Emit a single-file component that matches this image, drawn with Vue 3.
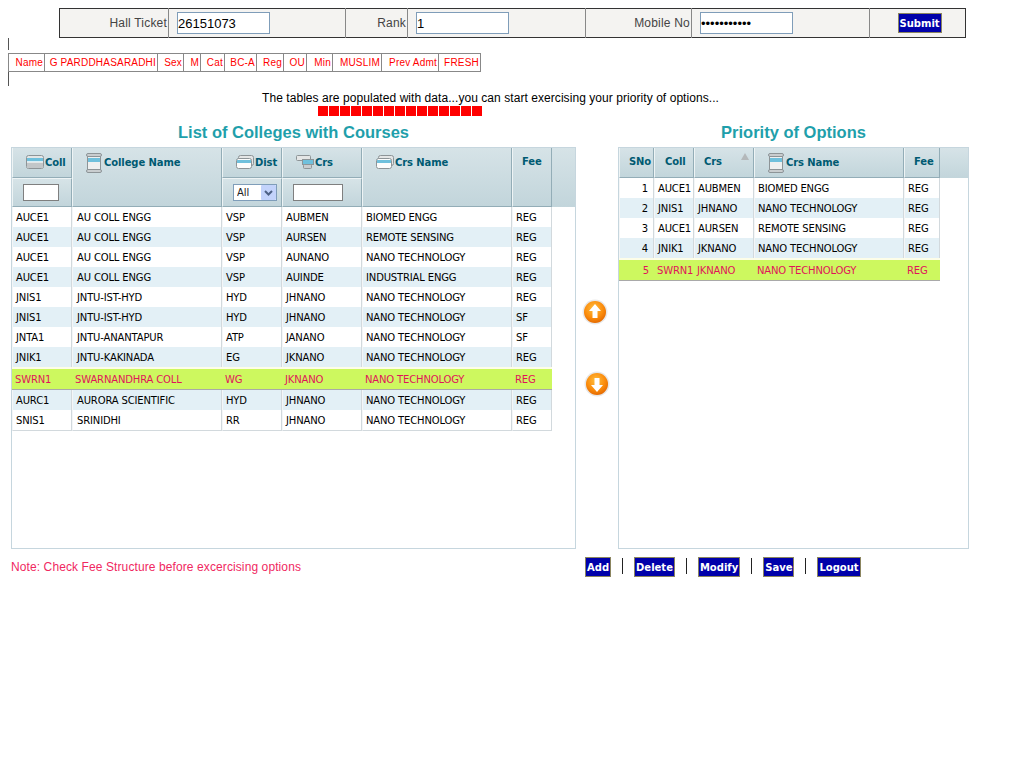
<template>
  <div class="page">
    <svg class="defs" xmlns="http://www.w3.org/2000/svg">
      <defs>
        <radialGradient id="orb" cx="45%" cy="35%" r="70%">
          <stop offset="0" stop-color="#ffc040" />
          <stop offset="0.6" stop-color="#fb8c0c" />
          <stop offset="1" stop-color="#e06400" />
        </radialGradient>
      </defs>
      <symbol id="ic-stack" viewBox="0 0 18 14">
        <rect x="0.5" y="0.5" width="17" height="13" rx="2" fill="#e4e6e6" stroke="#8d9497" />
        <rect x="1" y="3" width="16" height="3" fill="#6fc0dc" />
        <rect x="1" y="6" width="16" height="1" fill="#d8eef5" />
        <rect x="1" y="8" width="16" height="5" fill="#c2c6c8" />
      </symbol>
      <symbol id="ic-scroll" viewBox="0 0 16 20">
        <rect x="1.500" y="1.500" width="13" height="17" fill="#eef0f0" stroke="#8d9497" />
        <rect x="0.5" y="0.5" width="15" height="3" rx="1.500" fill="#c9cdcf" stroke="#8d9497" />
        <rect x="0.5" y="16.500" width="15" height="3" rx="1.500" fill="#c9cdcf" stroke="#8d9497" />
        <rect x="2" y="5" width="12" height="4" fill="#6fc0dc" />
      </symbol>
      <symbol id="ic-window" viewBox="0 0 18 14">
        <rect x="2.500" y="0.5" width="15" height="10" rx="2" fill="#e4e6e6" stroke="#8d9497" />
        <rect x="0.5" y="3.500" width="15" height="10" rx="2" fill="#fbfcfc" stroke="#8d9497" />
        <rect x="1" y="5" width="14" height="3" fill="#6fc0dc" />
      </symbol>
      <symbol id="ic-tree" viewBox="0 0 18 14">
        <rect x="0.5" y="0.5" width="14" height="5" rx="1" fill="#e4e6e6" stroke="#8d9497" />
        <rect x="6.500" y="4.500" width="11" height="5" fill="#6fc0dc" stroke="#8d9497" />
        <rect x="7.500" y="9.500" width="8" height="4" rx="1" fill="#c9cdcf" stroke="#8d9497" />
      </symbol>
    </svg>

    <table class="login">
      <colgroup>
        <col style="width:109px" /><col style="width:177px" />
        <col style="width:62px" /><col style="width:178px" />
        <col style="width:106px" /><col style="width:178px" />
        <col />
      </colgroup>
      <tbody>
        <tr>
          <td class="lbl">Hall Ticket</td>
          <td><input class="txt" type="text" value="26151073" /></td>
          <td class="lbl">Rank</td>
          <td><input class="txt" type="text" value="1" /></td>
          <td class="lbl">Mobile No</td>
          <td><input class="txt" type="password" value="98660123456" /></td>
          <td class="center"><button class="btn submit">Submit</button></td>
        </tr>
      </tbody>
    </table>

    <div class="tick"></div>
    <table class="info">
      <colgroup>
        <col v-for="(c, i) in infoCells" :key="i" :style="{ width: c.w + 'px' }" />
      </colgroup>
      <tbody>
        <tr>
          <td v-for="(c, i) in infoCells" :key="i">{{ c.t }}</td>
        </tr>
      </tbody>
    </table>
    <div class="tick tick2"></div>

    <p class="msg">The tables are populated with data...you can start exercising your priority of options...</p>
    <div class="progress">
      <span v-for="n in 15" :key="n"></span>
    </div>

    <div class="main">
      <h2 class="title">List of Colleges with Courses</h2>
      <div></div>
      <h2 class="title">Priority of Options</h2>

      <div class="panel left-panel">
        <table class="grid">
          <colgroup>
            <col style="width:60px" /><col style="width:150px" /><col style="width:60px" />
            <col style="width:80px" /><col style="width:150px" /><col style="width:40px" />
          </colgroup>
          <thead>
            <tr class="h1">
              <th><svg class="ic" width="18" height="14"><use href="#ic-stack" /></svg>Coll</th>
              <th rowspan="2"><svg class="ic tall" width="16" height="20"><use href="#ic-scroll" /></svg>College Name</th>
              <th><svg class="ic" width="18" height="14"><use href="#ic-window" /></svg>Dist</th>
              <th><svg class="ic" width="18" height="14"><use href="#ic-tree" /></svg>Crs</th>
              <th rowspan="2"><svg class="ic" width="18" height="14"><use href="#ic-window" /></svg>Crs Name</th>
              <th rowspan="2" class="plain">Fee</th>
            </tr>
            <tr class="h2">
              <th class="f"><input class="filter w36" type="text" /></th>
              <th class="f">
                <div class="dd">
                  <select><option>All</option></select>
                  <span class="dd-btn">
                    <svg width="9" height="6" viewBox="0 0 9 6"><path d="M1 1l3.500 3.500L8 1" fill="none" stroke="#4d6185" stroke-width="2" /></svg>
                  </span>
                </div>
              </th>
              <th class="f"><input class="filter w50" type="text" /></th>
            </tr>
          </thead>
          <tbody>
            <tr v-for="(r, i) in colleges" :key="i" :class="rowClass(r)">
              <td>{{ r.coll }}</td>
              <td class="p5">{{ r.name }}</td>
              <td>{{ r.dist }}</td>
              <td>{{ r.crs }}</td>
              <td>{{ r.course }}</td>
              <td>{{ r.fee }}</td>
            </tr>
          </tbody>
        </table>
      </div>

      <div class="arrows">
        <svg class="arrow up" width="26" height="26" viewBox="0 0 26 26">
          <circle cx="13" cy="13" r="12.500" fill="#e8e8e8" />
          <circle cx="13" cy="13" r="11" fill="url(#orb)" />
          <path d="M13 5l6 7h-3.500v7h-5v-7H7z" fill="#fff" />
        </svg>
        <svg class="arrow down" width="26" height="26" viewBox="0 0 26 26">
          <circle cx="13" cy="13" r="12.500" fill="#e8e8e8" />
          <circle cx="13" cy="13" r="11" fill="url(#orb)" />
          <path d="M13 21l-6-7h3.500V7h5v7H19z" fill="#fff" />
        </svg>
      </div>

      <div class="panel right-panel">
        <table class="grid">
          <colgroup>
            <col style="width:35px" /><col style="width:40px" /><col style="width:60px" />
            <col style="width:150px" /><col style="width:36px" />
          </colgroup>
          <thead>
            <tr class="h1">
              <th class="plain">SNo</th>
              <th class="plain p10">Coll</th>
              <th class="plain sorted">Crs<span class="sort"></span></th>
              <th><svg class="ic tall" width="16" height="20"><use href="#ic-scroll" /></svg>Crs Name</th>
              <th class="plain">Fee</th>
            </tr>
          </thead>
          <tbody>
            <tr v-for="r in priority" :key="r.sno" :class="rowClass(r)">
              <td class="num">{{ r.sno }}</td>
              <td>{{ r.coll }}</td>
              <td>{{ r.crs }}</td>
              <td>{{ r.course }}</td>
              <td>{{ r.fee }}</td>
            </tr>
          </tbody>
        </table>
      </div>

      <p class="note">Note: Check Fee Structure before excercising options</p>
      <div class="actions">
        <template v-for="(a, i) in actions" :key="a">
          <i v-if="i" class="sep"></i>
          <button class="btn">{{ a }}</button>
        </template>
      </div>
    </div>
  </div>
</template>

<script setup>
const infoCells = [
  { t: 'Name', w: 36 },
  { t: 'G PARDDHASARADHI', w: 113 },
  { t: 'Sex', w: 26 },
  { t: 'M', w: 17 },
  { t: 'Cat', w: 24 },
  { t: 'BC-A', w: 32 },
  { t: 'Reg', w: 27 },
  { t: 'OU', w: 23 },
  { t: 'Min', w: 26 },
  { t: 'MUSLIM', w: 49 },
  { t: 'Prev Admt', w: 57 },
  { t: 'FRESH', w: 42 }
]

const nano = 'NANO TECHNOLOGY'
const colleges = [
  { coll: 'AUCE1', name: 'AU COLL ENGG', dist: 'VSP', crs: 'AUBMEN', course: 'BIOMED ENGG', fee: 'REG' },
  { coll: 'AUCE1', name: 'AU COLL ENGG', dist: 'VSP', crs: 'AURSEN', course: 'REMOTE SENSING', fee: 'REG', alt: true },
  { coll: 'AUCE1', name: 'AU COLL ENGG', dist: 'VSP', crs: 'AUNANO', course: nano, fee: 'REG' },
  { coll: 'AUCE1', name: 'AU COLL ENGG', dist: 'VSP', crs: 'AUINDE', course: 'INDUSTRIAL ENGG', fee: 'REG', alt: true },
  { coll: 'JNIS1', name: 'JNTU-IST-HYD', dist: 'HYD', crs: 'JHNANO', course: nano, fee: 'REG' },
  { coll: 'JNIS1', name: 'JNTU-IST-HYD', dist: 'HYD', crs: 'JHNANO', course: nano, fee: 'SF', alt: true },
  { coll: 'JNTA1', name: 'JNTU-ANANTAPUR', dist: 'ATP', crs: 'JANANO', course: nano, fee: 'SF' },
  { coll: 'JNIK1', name: 'JNTU-KAKINADA', dist: 'EG', crs: 'JKNANO', course: nano, fee: 'REG', alt: true },
  { coll: 'SWRN1', name: 'SWARNANDHRA COLL', dist: 'WG', crs: 'JKNANO', course: nano, fee: 'REG', picked: true },
  { coll: 'AURC1', name: 'AURORA SCIENTIFIC', dist: 'HYD', crs: 'JHNANO', course: nano, fee: 'REG', alt: true },
  { coll: 'SNIS1', name: 'SRINIDHI', dist: 'RR', crs: 'JHNANO', course: nano, fee: 'REG' }
]

const priority = [
  { sno: 1, coll: 'AUCE1', crs: 'AUBMEN', course: 'BIOMED ENGG', fee: 'REG' },
  { sno: 2, coll: 'JNIS1', crs: 'JHNANO', course: nano, fee: 'REG', alt: true },
  { sno: 3, coll: 'AUCE1', crs: 'AURSEN', course: 'REMOTE SENSING', fee: 'REG' },
  { sno: 4, coll: 'JNIK1', crs: 'JKNANO', course: nano, fee: 'REG', alt: true },
  { sno: 5, coll: 'SWRN1', crs: 'JKNANO', course: nano, fee: 'REG', picked: true }
]

const actions = ['Add', 'Delete', 'Modify', 'Save', 'Logout']

function rowClass(r) {
  return { alt: r.alt, picked: r.picked }
}
</script>

<style scoped>
.page {
  padding-top: 8px;
  font-family: "Liberation Sans", Arial, sans-serif;
  font-size: 12px;
  color: #000;
}
.defs {
  display: block;
  width: 0;
  height: 0;
}

/* login bar */
.login {
  width: 907px;
  height: 30px;
  margin-left: 59px;
  border-collapse: collapse;
  table-layout: fixed;
  background: #f4f3f1;
  border: 1px solid #333;
}
.login td {
  border-left: 1px solid #888;
  padding: 0 0 0 8px;
  height: 28px;
}
.login td:first-child {
  border-left: 0;
}
.login .lbl {
  padding: 0 1px 0 0;
  text-align: right;
  color: #444;
  letter-spacing: 0.2px;
}
.login .center {
  padding: 0 0 0 4px;
  text-align: center;
}
.txt {
  display: block;
  box-sizing: border-box;
  width: 93px;
  height: 22px;
  border: 1px solid #7f9db9;
  padding: 0;
  font: 13px "Liberation Sans", Arial, sans-serif;
  color: #000;
  background: #fff;
}
.btn {
  box-sizing: border-box;
  height: 20px;
  padding: 0 1px;
  background: #0000aa;
  border: 1px solid #8b8560;
  color: #fff;
  font: bold 10px "DejaVu Sans", Verdana, sans-serif;
  cursor: pointer;
}
.submit {
  width: 44px;
  vertical-align: middle;
}

/* candidate strip */
.tick {
  width: 1px;
  height: 12px;
  margin: 0 0 3px 8px;
  background: #555;
}
.tick2 {
  height: 14px;
  margin: 0 0 0 8px;
}
.info {
  width: 472px;
  margin-left: 8px;
  border-collapse: collapse;
  table-layout: fixed;
  border: 1px solid #888;
}
.info td {
  height: 17px;
  padding: 0 1px 0 0;
  border-left: 1px solid #888;
  color: #f00;
  font-size: 10px;
  letter-spacing: 0.2px;
  text-align: right;
  white-space: nowrap;
  overflow: hidden;
}

.msg {
  margin: 5px 0 0;
  width: 981px;
  line-height: 15px;
  text-align: center;
  letter-spacing: 0.06px;
}
.progress {
  display: flex;
  width: 165px;
  gap: 1px;
  margin: 0 0 0 318px;
}
.progress span {
  width: 10px;
  height: 10px;
  background: #f00;
}

/* two lists */
.main {
  display: grid;
  grid-template-columns: 565px 42px 351px;
  margin: 6px 0 0 11px;
}
.title {
  margin: 0 0 5px;
  height: 20px;
  line-height: 20px;
  text-align: center;
  font-size: 16.5px;
  font-weight: bold;
  color: #1f9fab;
}
.panel {
  box-sizing: border-box;
  height: 402px;
  border: 1px solid #c6d6de;
  background-repeat: no-repeat;
  background-image: linear-gradient(#d6e3e7, #c2d5db);
}
.left-panel {
  background-size: 100% 59px;
}
.right-panel {
  background-size: 100% 30px;
}
.left-panel .grid {
  width: 540px;
}
.right-panel .grid {
  width: 321px;
}
.grid {
  border-collapse: separate;
  border-spacing: 0;
  table-layout: fixed;
  font: 10px "DejaVu Sans", Verdana, sans-serif;
}
.grid th {
  box-sizing: border-box;
  padding: 7px 0 0 13px;
  vertical-align: top;
  text-align: left;
  white-space: nowrap;
  font-size: 10px;
  letter-spacing: -0.1px;
  color: #005a72;
  border-left: 1px solid #eef4f5;
  border-right: 1px solid #93adb7;
  border-bottom: 1px solid #93adb7;
  background: linear-gradient(#d6e3e7, #c2d5db);
}
.grid th.plain {
  padding: 8px 0 0 9px;
}
.grid th.p10 {
  padding-left: 10px;
}
.grid th:has(.tall) {
  padding-top: 5px;
}
.grid th.sorted {
  position: relative;
}
.sort {
  position: absolute;
  top: 5px;
  right: 4px;
  border-left: 4px solid transparent;
  border-right: 4px solid transparent;
  border-bottom: 7px solid #b4b8ba;
}
.h1 th {
  height: 30px;
}
.h2 th {
  height: 29px;
}
.grid th.f {
  padding: 5px 0 0 10px;
  border-top: 1px solid #eef4f5;
}
.ic {
  vertical-align: -3px;
  margin-right: 1px;
}
.ic.tall {
  vertical-align: -7px;
  margin-right: 2px;
}
.filter {
  display: block;
  box-sizing: border-box;
  height: 17px;
  border: 1px solid #7f7f7f;
  padding: 0 1px;
  background: #fff;
}
.w36 {
  width: 36px;
}
.w50 {
  width: 50px;
}
.dd {
  display: flex;
  box-sizing: border-box;
  width: 44px;
  height: 17px;
  border: 1px solid #7f9db9;
  background: #fff;
}
.dd select {
  flex: 1;
  min-width: 0;
  appearance: none;
  border: 0;
  padding: 0 0 0 3px;
  background: transparent;
  font: 10px "DejaVu Sans", Verdana, sans-serif;
  color: #222;
}
.dd-btn {
  display: flex;
  align-items: center;
  justify-content: center;
  width: 15px;
  background: #c3d3fb;
  border-radius: 1px;
}
.grid td {
  box-sizing: border-box;
  height: 20px;
  padding: 0 0 0 3px;
  white-space: nowrap;
  overflow: hidden;
  letter-spacing: -0.15px;
  background: #fff;
  border-right: 1px solid #d2d9dd;
  border-left: 1px solid #f4f6f7;
}
.grid td.p5 {
  padding-left: 4px;
}
.grid td.num {
  padding: 0 5px 0 0;
  text-align: right;
}
.grid tr.alt td {
  background: #e3f0f6;
}
.grid tr.picked td {
  height: 23px;
  padding-left: 3px;
  background: #cdf85f;
  color: #e0145a;
  border-left: 0;
  border-right: 0;
  border-top: 2px solid #fdfde8;
  border-bottom: 1px solid #a9a9a9;
}
.grid tr.picked td.num {
  padding: 0 5px 0 0;
}
.left-panel tbody tr:last-child td {
  height: 21px;
  border-bottom: 1px solid #d2d9dd;
}

.arrows {
  display: flex;
  flex-direction: column;
}
.arrow {
  display: block;
}
.arrow.up {
  margin: 152px 0 0 6px;
}
.arrow.down {
  margin: 46px 0 0 8px;
}

.note {
  margin: 8px 0 0;
  line-height: 20px;
  color: #f0285f;
  letter-spacing: 0.1px;
}
.actions {
  grid-column: 2 / 4;
  display: flex;
  align-items: flex-start;
  gap: 11px;
  margin: 8px 0 0 9px;
}
.sep {
  width: 1px;
  height: 16px;
  margin-top: 1px;
  background: #222;
}
</style>

<style>
body {
  background: #fff;
}
</style>
